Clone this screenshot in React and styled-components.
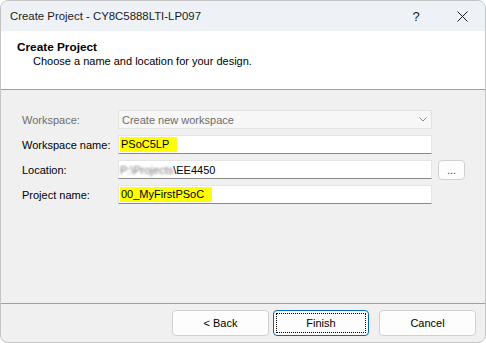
import React from 'react'
import styled, { createGlobalStyle } from 'styled-components'

const Global = createGlobalStyle`
  html, body {
    margin: 0;
    padding: 0;
    background: #ffffff;
  }
  body {
    font-family: "Liberation Sans", Arial, sans-serif;
  }
`

const Window = styled.div`
  width: 486px;
  height: 343px;
  box-sizing: border-box;
  border: 1px solid #c4c4c4;
  border-radius: 8px;
  overflow: hidden;
  display: flex;
  flex-direction: column;
  background: #f0f0f0;
`

const TitleBar = styled.div`
  height: 30px;
  flex: none;
  background: #eef2f7;
  display: flex;
  align-items: center;
  padding-left: 9px;
  font-size: 11.4px;
  color: #1b1b1b;
`

const TitleText = styled.span`
  flex: 1;
`

const TitleButton = styled.div`
  width: ${props => props.w}px;
  display: flex;
  justify-content: center;
  align-items: center;
  color: #1b1b1b;
  font-size: 13px;
`

const Header = styled.div`
  height: 59px;
  flex: none;
  background: #ffffff;
  border-bottom: 1px solid #a0a0a0;
  box-sizing: border-box;
  padding: 6px 0 0 16px;
  color: #000;
`

const HeaderTitle = styled.div`
  font-weight: bold;
  font-size: 11.8px;
  line-height: 16px;
  margin-top: 2px;
`

const HeaderSub = styled.div`
  font-size: 11px;
  line-height: 13px;
  padding-left: 16px;
`

const Body = styled.div`
  flex: 1;
  padding: 20px 0 0 21px;
`

const Form = styled.div`
  display: grid;
  grid-template-columns: 90px 314px 27px;
  grid-auto-rows: 19px;
  column-gap: 6px;
  row-gap: 6px;
  align-items: center;
`

const Label = styled.div`
  font-size: 11px;
  color: ${props => props.disabled ? '#6d6d6d' : '#000'};
  grid-column: 1;
`

const Field = styled.div`
  grid-column: 2;
  height: 19px;
  box-sizing: border-box;
  display: flex;
  align-items: center;
  padding-left: 1px;
  font-size: 11px;
  color: #000;
  background: ${props => props.disabled ? '#f7f7f7' : '#ffffff'};
  border: 1px solid ${props => props.disabled ? '#e3e3e3' : '#e5e5e5'};
  border-bottom-color: ${props => props.disabled ? '#e3e3e3' : '#8a8a8a'};
`

const ComboText = styled.span`
  flex: 1;
  color: #6d6d6d;
  padding-left: 2px;
`

const Mark = styled.span`
  background: #ffff00;
  padding: 1px 8px 1px 1px;
  line-height: 13px;
`

const Blurred = styled.span`
  filter: blur(1.3px);
  color: #777;
`

const Browse = styled.button`
  grid-column: 3;
  width: 27px;
  height: 20px;
  box-sizing: border-box;
  border: 1px solid #d0d0d0;
  border-radius: 4px;
  background: #fdfdfd;
  padding: 0;
  font-family: inherit;
  font-size: 11px;
  color: #5a1fa0;
  line-height: 14px;
`

const Footer = styled.div`
  height: 39px;
  box-sizing: border-box;
  flex: none;
  border-top: 1px solid #a0a0a0;
  display: flex;
  justify-content: flex-end;
  align-items: flex-start;
  padding: 6px 9px 0 0;
  gap: 4px;
`

const Button = styled.button`
  width: ${props => props.w || 97}px;
  height: 26px;
  margin-left: ${props => props.ml || 0}px;
  box-sizing: border-box;
  border: 1px solid ${props => props.primary ? '#0067c0' : '#d0d0d0'};
  border-radius: 4px;
  background: #fdfdfd;
  font-family: inherit;
  font-size: 11px;
  color: #000;
  padding: 2px;
  display: flex;
`

const Focus = styled.span`
  flex: 1;
  display: flex;
  align-items: center;
  justify-content: center;
  border: 1px ${props => props.on ? 'dotted #000' : 'solid transparent'};
`

const Chevron = () => (
  <svg width="8" height="5" viewBox="0 0 8 5" style={{ marginRight: 4 }}>
    <path d="M0.5 0.5 L4 4 L7.5 0.5" fill="none" stroke="#8a8a8a" strokeWidth="1" />
  </svg>
)

const Close = () => (
  <svg width="11" height="11" viewBox="0 0 11 11">
    <path d="M0.5 0.5 L10.5 10.5 M10.5 0.5 L0.5 10.5" stroke="#1b1b1b" strokeWidth="1" />
  </svg>
)

export default function App() {
  return (
    <>
      <Global />
      <Window>
        <TitleBar>
          <TitleText>Create Project - CY8C5888LTI-LP097</TitleText>
          <TitleButton w={46}>?</TitleButton>
          <TitleButton w={46}><Close /></TitleButton>
        </TitleBar>
        <Header>
          <HeaderTitle>Create Project</HeaderTitle>
          <HeaderSub>Choose a name and location for your design.</HeaderSub>
        </Header>
        <Body>
          <Form>
            <Label disabled>Workspace:</Label>
            <Field disabled>
              <ComboText>Create new workspace</ComboText>
              <Chevron />
            </Field>
            <span />
            <Label>Workspace name:</Label>
            <Field><Mark>PSoC5LP</Mark></Field>
            <span />
            <Label>Location:</Label>
            <Field><Blurred>P:\Projects</Blurred>\EE4450</Field>
            <Browse>...</Browse>
            <Label>Project name:</Label>
            <Field><Mark>00_MyFirstPSoC</Mark></Field>
            <span />
          </Form>
        </Body>
        <Footer>
          <Button><Focus>&lt; Back</Focus></Button>
          <Button primary w={96}><Focus on>Finish</Focus></Button>
          <Button ml={6}><Focus>Cancel</Focus></Button>
        </Footer>
      </Window>
    </>
  )
}
